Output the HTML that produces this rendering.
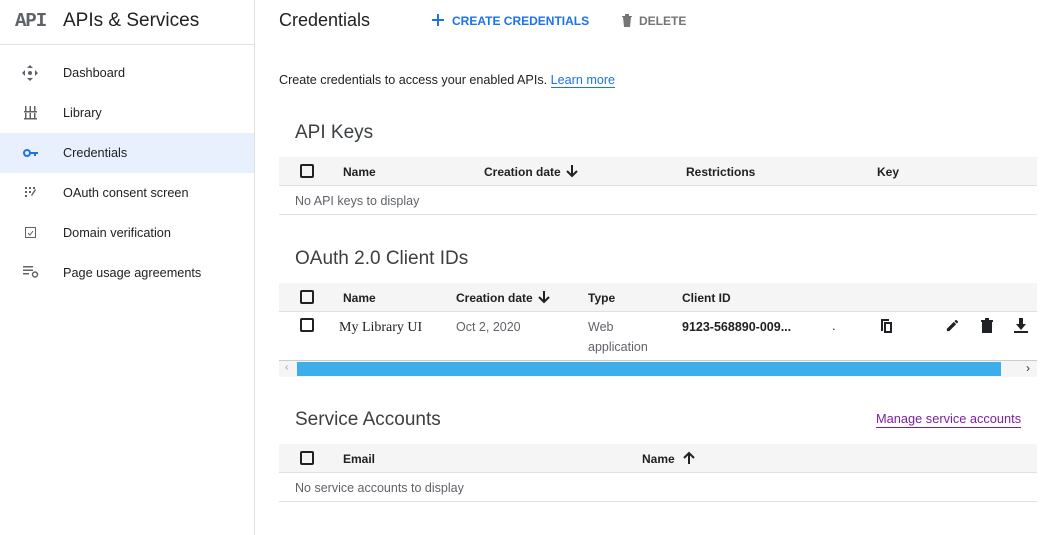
<!DOCTYPE html>
<html><head><style>
*{margin:0;padding:0;box-sizing:border-box}
body{width:1061px;height:535px;overflow:hidden;background:#fff;font-family:"Liberation Sans",Roboto,sans-serif;color:#202124;position:relative;font-size:13px}
.a{position:absolute;white-space:nowrap}
.side{position:absolute;left:0;top:0;width:255px;height:535px;border-right:1px solid #e0e0e0}
.hl{position:absolute;left:0;top:44px;width:255px;height:1px;background:#e0e0e0}
.nav{position:absolute;left:0;width:254px;height:40px}
.nav span{position:absolute;left:63px;top:13px;font-size:12.7px;color:#202124}
.th{position:absolute;left:279px;width:758px;height:29px;background:#f5f5f5;border-bottom:1px solid #e0e0e0}
.th span{position:absolute;top:8px;font-size:12px;font-weight:bold;color:#202124}
.th svg{position:absolute;top:7px}
.cb{position:absolute;left:21px;width:14px;height:14px;border:2px solid #202124;border-radius:2px}
.line{position:absolute;left:279px;width:758px;height:1px;background:#e0e0e0}
.h2{position:absolute;left:295px;font-size:19px;color:#3c4043}
.g{color:#5f6368}
</style></head><body>
<div class="side">
 <div class="a" style="left:15px;top:10px;font-family:'Liberation Mono',monospace;font-weight:bold;font-size:19px;color:#5f6368;letter-spacing:-1px">API</div>
 <div class="a" style="left:63px;top:10px;font-size:19px;color:#202124">APIs &amp; Services</div>
 <div class="nav" style="top:53px"><svg class="a" style="left:22px;top:12px" width="16" height="16" viewBox="0 0 16 16" fill="#5f6368"><path d="M8 0l3 3H5zM8 16l-3-3h6zM0 8l3-3v6zM16 8l-3 3V5z"/><circle cx="8" cy="8" r="2"/></svg><span>Dashboard</span></div>
 <div class="nav" style="top:93px"><svg class="a" style="left:24px;top:13px" width="13" height="14" viewBox="0 0 13 14" fill="#5f6368"><rect x="0" y="5" width="13" height="1.5"/><rect x="0" y="12" width="13" height="1.5"/><rect x="1" y="0" width="1.5" height="5"/><rect x="5.5" y="0" width="1.5" height="5"/><rect x="10" y="0" width="1.5" height="5"/><rect x="1" y="7" width="1.5" height="5"/><rect x="5.5" y="7" width="1.5" height="5"/><rect x="10" y="7" width="1.5" height="5"/></svg><span>Library</span></div>
 <div class="nav" style="top:133px;background:#e8f0fe"><svg class="a" style="left:23px;top:15px" width="16" height="10" viewBox="0 0 16 10"><circle cx="4" cy="5" r="3" fill="none" stroke="#1a73e8" stroke-width="2"/><path d="M7 4h8v2h-2v2h-2V6H7z" fill="#1a73e8"/></svg><span style="color:#202124">Credentials</span></div>
 <div class="nav" style="top:173px"><svg class="a" style="left:25px;top:14px" width="12" height="10" viewBox="0 0 12 10" fill="#5f6368"><rect x="0" y="0" width="2" height="2"/><rect x="4" y="0" width="2" height="2"/><rect x="8" y="0" width="2" height="2"/><rect x="0" y="4" width="2" height="2"/><rect x="4" y="4" width="2" height="2"/><rect x="0" y="8" width="2" height="2"/><path d="M6 8l4-6 1 1-4 6z"/></svg><span>OAuth consent screen</span></div>
 <div class="nav" style="top:213px"><svg class="a" style="left:25px;top:14px" width="11" height="11" viewBox="0 0 11 11"><rect x="0.5" y="0.5" width="10" height="10" fill="none" stroke="#5f6368"/><path d="M3 6l2 2 3-4" fill="none" stroke="#5f6368"/></svg><span>Domain verification</span></div>
 <div class="nav" style="top:253px"><svg class="a" style="left:23px;top:13px" width="16" height="12" viewBox="0 0 16 12" fill="#5f6368"><rect x="0" y="0" width="10" height="1.5"/><rect x="0" y="3.5" width="10" height="1.5"/><rect x="0" y="7" width="6" height="1.5"/><circle cx="12" cy="8.5" r="2.5" fill="none" stroke="#5f6368" stroke-width="1.5"/></svg><span>Page usage agreements</span></div>
</div>
<div class="hl"></div>
<div class="a" style="left:279px;top:10px;font-size:18px;color:#202124">Credentials</div>
<svg class="a" style="left:432px;top:14px" width="12" height="12" viewBox="0 0 12 12" fill="#1a73e8"><path d="M5 0h2v5h5v2H7v5H5V7H0V5h5z"/></svg>
<div class="a" style="left:452px;top:14px;font-size:12px;font-weight:bold;color:#1a73e8">CREATE CREDENTIALS</div>
<svg class="a" style="left:621px;top:13px" width="12" height="14" viewBox="0 0 12 14" fill="#757575"><path d="M1 3h10v1H1zM4 1h4v2H4zM2 4h8l-1 10H3z"/></svg>
<div class="a" style="left:639px;top:14px;font-size:12px;font-weight:bold;color:#757575">DELETE</div>
<div class="a" style="left:279px;top:73px;font-size:12.6px">Create credentials to access your enabled APIs. <span style="color:#1a73e8;border-bottom:1px solid #1a73e8">Learn more</span></div>

<div class="h2" style="top:122px">API Keys</div>
<div class="th" style="top:157px"><div class="cb" style="top:7px"></div><span style="left:64px">Name</span><span style="left:205px">Creation date</span><svg style="left:286px" width="14" height="14" viewBox="0 0 14 14"><path d="M7 1v11M2 7l5 5 5-5" fill="none" stroke="#202124" stroke-width="2"/></svg><span style="left:407px">Restrictions</span><span style="left:598px">Key</span></div>
<div class="a g" style="left:295px;top:194px;font-size:12.5px">No API keys to display</div>
<div class="line" style="top:214px"></div>

<div class="h2" style="top:248px">OAuth 2.0 Client IDs</div>
<div class="th" style="top:283px"><div class="cb" style="top:7px"></div><span style="left:64px">Name</span><span style="left:177px">Creation date</span><svg style="left:258px" width="14" height="14" viewBox="0 0 14 14"><path d="M7 1v11M2 7l5 5 5-5" fill="none" stroke="#202124" stroke-width="2"/></svg><span style="left:309px">Type</span><span style="left:403px">Client ID</span></div>
<div class="cb" style="left:300px;top:318px"></div>
<div class="a" style="left:339px;top:320px;font-family:'Liberation Serif',serif;font-size:14px">My Library UI</div>
<div class="a g" style="left:456px;top:320px;font-size:12.5px">Oct 2, 2020</div>
<div class="a g" style="left:588px;top:317px;font-size:12.5px;line-height:20px;white-space:normal;width:80px">Web application</div>
<div class="a" style="left:682px;top:320px;font-size:12.5px;font-weight:bold">9123-568890-009...</div>
<div class="a" style="left:832px;top:318px">.</div>
<svg class="a" style="left:881px;top:319px" width="12" height="14" viewBox="0 0 12 14" fill="#202124"><path d="M0 0h8v2H2v10H0z"/><path d="M3 3h8v11H3zM5 5v7h4V5z"/></svg>
<svg class="a" style="left:945px;top:318px" width="15" height="15" viewBox="0 0 24 24" fill="#202124"><path d="M3 17.25V21h3.75L17.81 9.94l-3.75-3.75zM20.71 7.04a1 1 0 000-1.41l-2.34-2.34a1 1 0 00-1.41 0l-1.83 1.83 3.75 3.75z"/></svg>
<svg class="a" style="left:981px;top:318px" width="12" height="15" viewBox="0 0 12 15" fill="#202124"><path d="M0 2h12v2H0zM4 0h4v2H4zM1 4h10v11H1z"/></svg>
<svg class="a" style="left:1014px;top:318px" width="14" height="15" viewBox="0 0 14 15" fill="#202124"><path d="M5 0h4v6h3l-5 6-5-6h3zM0 13h14v2H0z"/></svg>
<div class="line" style="top:360px;background:#ccc"></div>
<div class="a" style="left:279px;top:361px;width:758px;height:16px;background:#f5f5f5"></div>
<div class="a" style="left:297px;top:362px;width:704px;height:14px;background:#3daee9"></div>
<div class="a" style="left:285px;top:362px;font-size:10px;color:#999">‹</div>
<div class="a" style="left:1026px;top:361px;font-size:12px;color:#333">›</div>

<div class="h2" style="top:409px">Service Accounts</div>
<div class="a" style="left:876px;top:411px;font-size:12.8px;color:#7b1fa2;border-bottom:1px solid #7b1fa2;line-height:16px">Manage service accounts</div>
<div class="th" style="top:444px"><div class="cb" style="top:7px"></div><span style="left:64px">Email</span><span style="left:363px">Name</span><svg style="left:403px" width="14" height="14" viewBox="0 0 14 14"><path d="M7 13V2M2 7l5-5 5 5" fill="none" stroke="#202124" stroke-width="2"/></svg></div>
<div class="a g" style="left:295px;top:481px;font-size:12.5px">No service accounts to display</div>
<div class="line" style="top:501px"></div>
</body></html>
